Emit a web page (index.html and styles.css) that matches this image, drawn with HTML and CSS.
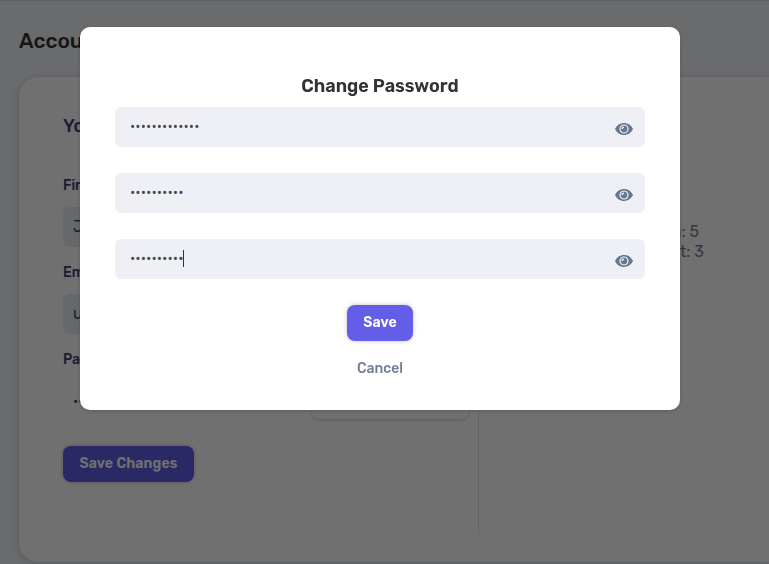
FILE: index.html
```html
<!DOCTYPE html>
<html lang="en">
<head>
<meta charset="utf-8">
<title>Account Settings</title>
<meta name="viewport" content="width=device-width, initial-scale=1">
<link rel="stylesheet" href="styles.css">
</head>
<body>
<div class="page">
  <h1 class="page-title">Account</h1>
  <div class="card">
    <div class="details">
      <h2>You</h2>
      <label>First Name</label>
      <div class="input">John</div>
      <label>Email</label>
      <div class="input">user@mail.com</div>
      <label>Password</label>
      <div class="password-row">
        <span class="dots">••••••••</span>
        <button class="btn-outline">Change</button>
      </div>
      <button class="btn btn-save">Save Changes</button>
    </div>
    <div class="stats">
      <p class="stat-first">Written: 5</p>
      <p>Sent: 3</p>
    </div>
  </div>
</div>

<div class="overlay">
  <div class="modal">
    <h3>Change Password</h3>
    <div class="field">
      <span class="dots">•••••••••••••</span>
      <svg class="eye" viewBox="0 0 18 12"><use href="#eye"/></svg>
    </div>
    <div class="field">
      <span class="dots">••••••••••</span>
      <svg class="eye" viewBox="0 0 18 12"><use href="#eye"/></svg>
    </div>
    <div class="field">
      <span class="dots">••••••••••</span><i class="caret"></i>
      <svg class="eye" viewBox="0 0 18 12"><use href="#eye"/></svg>
    </div>
    <button class="btn">Save</button>
    <button class="btn-cancel">Cancel</button>
  </div>
</div>

<svg class="symbols">
  <symbol id="eye" viewBox="0 0 18 12">
    <path fill="#67778e" d="M9 0C5 0 1.700 2.300 0 6c1.700 3.700 5 6 9 6s7.300-2.300 9-6C16.300 2.300 13 0 9 0z"/>
    <circle cx="9" cy="6" r="4" fill="none" stroke="#eff0f6" stroke-width="1.200"/>
    <path d="M9 4.100a1.900 1.900 0 0 0-1.900 1.900" fill="none" stroke="#eff0f6" stroke-width="1.400"/>
  </symbol>
</svg>
</body>
</html>
```
FILE: styles.css
```css
* {
  box-sizing: border-box;
}

body {
  margin: 0;
  height: 564px;
  overflow: hidden;
  background: #eff3f7;
  color: #333;
  font-family: Rubik, Roboto, sans-serif;
  font-size: 14px;
}

h1, h2, h3, p {
  margin: 0;
}

button {
  font: inherit;
  border: 0;
}

.page {
  height: 564px;
  padding: 26px 0 0 19px;
  border-top: 1px solid #d5d8dc;
}

.page-title {
  height: 50px;
  font-size: 21px;
  line-height: 27px;
  font-weight: 500;
}

.card {
  display: flex;
  height: 485px;
  background: #fff;
  border-radius: 20px 0 0 20px;
  box-shadow: 0 1px 8px rgba(60, 70, 100, .2);
}

.details {
  width: 460px;
  height: 457px;
  padding: 36px 9px 0 44px;
  border-right: 1px solid #e2e2e2;
}

.details h2 {
  margin-bottom: 37px;
  font-size: 18px;
  line-height: 26px;
  font-weight: 500;
  color: #413d79;
}

.details label {
  display: block;
  height: 31px;
  line-height: 20px;
  font-weight: 500;
  color: #413d79;
}

.input {
  width: 100%;
  height: 40px;
  margin-bottom: 16px;
  padding-left: 10px;
  background: #e9eef4;
  border-radius: 6px;
  font-size: 16px;
  line-height: 40px;
  color: #4a4a4a;
}

.password-row {
  display: flex;
  justify-content: space-between;
  align-items: center;
  height: 38px;
  margin-bottom: 27px;
  padding-left: 10px;
}

.password-row .dots {
  padding-top: 4px;
}

.btn-outline {
  width: 158px;
  height: 38px;
  background: #fff;
  border-radius: 8px;
  box-shadow: 0 1px 3px rgba(0, 0, 0, .2);
}

.btn {
  display: block;
  width: 66px;
  height: 36px;
  padding: 0 0 2px;
  background: #635de7;
  border-radius: 8px;
  box-shadow: 0 0 4px rgba(0, 0, 0, .25);
  color: #fff;
  font-weight: 600;
  letter-spacing: .15px;
}

.btn-save {
  width: 131px;
}

.stats {
  width: 225px;
  padding-top: 145px;
  font-size: 16px;
  line-height: 20px;
  text-align: right;
  color: #718096;
}

.stat-first {
  padding-right: 5px;
}

.overlay {
  position: fixed;
  inset: 0;
  padding: 27px 0 0 80px;
  background: rgba(0, 0, 0, .56);
}

.modal {
  display: flex;
  flex-direction: column;
  align-items: center;
  width: 600px;
  height: 383px;
  padding: 46px 35px 0;
  background: #fff;
  border-radius: 10px;
  box-shadow: 0 1px 4px rgba(0, 0, 0, .2);
}

.modal h3 {
  margin-bottom: 8px;
  font-size: 18px;
  line-height: 26px;
  font-weight: 600;
}

.field {
  display: flex;
  align-items: center;
  width: 100%;
  height: 40px;
  margin-bottom: 26px;
  padding: 0 12px 0 15px;
  background: #eff0f6;
  border-radius: 6px;
}

.dots {
  font-size: 14px;
  line-height: 20px;
  color: #4a4a4a;
}

.caret {
  width: 1px;
  height: 17px;
  margin-bottom: 2px;
  background: #333;
}

.eye {
  width: 18px;
  height: 12px;
  margin: 4px 0 0 auto;
}

.btn-cancel {
  height: 20px;
  margin-top: 17px;
  padding: 0;
  background: none;
  font-weight: 500;
  color: #718096;
}

.symbols {
  display: none;
}
```
